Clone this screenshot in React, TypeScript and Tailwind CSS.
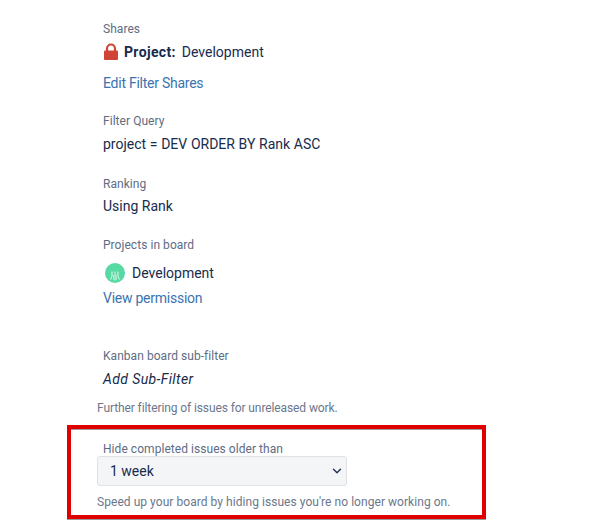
import { ChevronDown } from 'lucide-react';
import React from 'react';

const labelClass = 'text-[12px] leading-[16px] text-[#5e6c84] tracking-[0.05px]';
const bodyClass = 'text-[14px] leading-[20px] text-[#172b4d]';
const linkClass = 'text-[14px] leading-[20px] text-[#3b73af] tracking-[-0.25px]';

const LockIcon: React.FC = () => (
  <svg width="16" height="18" viewBox="0 0 16 18" className="shrink-0">
    <path d="M4 8V5.5a4 4 0 0 1 8 0V8" fill="none" stroke="#d04437" strokeWidth="2.2" />
    <rect x="1" y="7.5" width="14" height="9.5" rx="1" fill="#d04437" />
  </svg>
);

const ProjectAvatar: React.FC = () => (
  <svg width="20" height="20" viewBox="0 0 20 20" className="shrink-0">
    <circle cx="10" cy="10" r="10" fill="#57d9a3" />
    <g stroke="#e3f8ee" strokeWidth="1" fill="none">
      <path d="M7 8.5v5L5.5 16.5" />
      <path d="M10 8.5v9" />
      <path d="M13 8.5v5L14.5 16.5" />
      <path d="M8.5 12v5M11.5 12v5" strokeOpacity="0.6" />
    </g>
  </svg>
);

export default function App() {
  return (
    <div className="w-[595px] h-[522px] overflow-hidden bg-white font-['Roboto','Noto_Sans',sans-serif] pt-[21px]">
      <div className="pl-[103px]">
        <div className={labelClass}>Shares</div>
        <div className="flex items-center mt-[5px] h-[20px]">
          <LockIcon />
          <span className={`${bodyClass} font-bold ml-[5px] tracking-[0.35px]`}>Project:</span>
          <span className={`${bodyClass} ml-[6px]`}>Development</span>
        </div>
        <div className={`${linkClass} mt-[11px]`}>Edit Filter Shares</div>

        <div className={`${labelClass} mt-[20px]`}>Filter Query</div>
        <div className={`${bodyClass} mt-[5px] [word-spacing:0.2px]`}>project = DEV ORDER BY Rank ASC</div>

        <div className={`${labelClass} mt-[22px]`}>Ranking</div>
        <div className={`${bodyClass} mt-[4px]`}>Using Rank</div>

        <div className={`${labelClass} mt-[21px]`}>Projects in board</div>
        <div className="flex items-center mt-[10px] h-[20px] pl-[2px]">
          <ProjectAvatar />
          <span className={`${bodyClass} ml-[7px]`}>Development</span>
        </div>
        <div className={`${linkClass} mt-[5px]`}>View permission</div>

        <div className={`${labelClass} mt-[40px]`}>Kanban board sub-filter</div>
        <div className={`${bodyClass} italic mt-[5px] tracking-[0.4px]`}>Add Sub-Filter</div>
      </div>

      <div className="pl-[97px] mt-[11px] text-[12px] leading-[16px] text-[#6b778c] tracking-[-0.1px]">
        Further filtering of issues for unreleased work.
      </div>

      <div className="ml-[67px] mt-[9px] w-[419px] h-[94px] border-4 border-[#e00000] shadow-[inset_0_1px_0_#9a9a9a,0_1px_0_#9a9a9a] pl-[26px] pt-[12px]">
        <div className={`${labelClass} pl-[6px]`}>Hide completed issues older than</div>
        <div className="relative w-[250px] mt-[-1px]">
          <select className="block w-full h-[30px] appearance-none rounded-[3px] border border-[#dfe1e6] bg-[#f4f5f7] pl-[12px] text-[14px] text-[#172b4d]">
            <option>1 week</option>
          </select>
          <ChevronDown
            size={14}
            strokeWidth={2.5}
            className="absolute right-[3px] top-[8px] text-[#253858] pointer-events-none"
          />
        </div>
        <div className="text-[12px] leading-[16px] text-[#6b778c] mt-[8px] tracking-[0.05px]">
          Speed up your board by hiding issues you're no longer working on.
        </div>
      </div>
    </div>
  );
}
